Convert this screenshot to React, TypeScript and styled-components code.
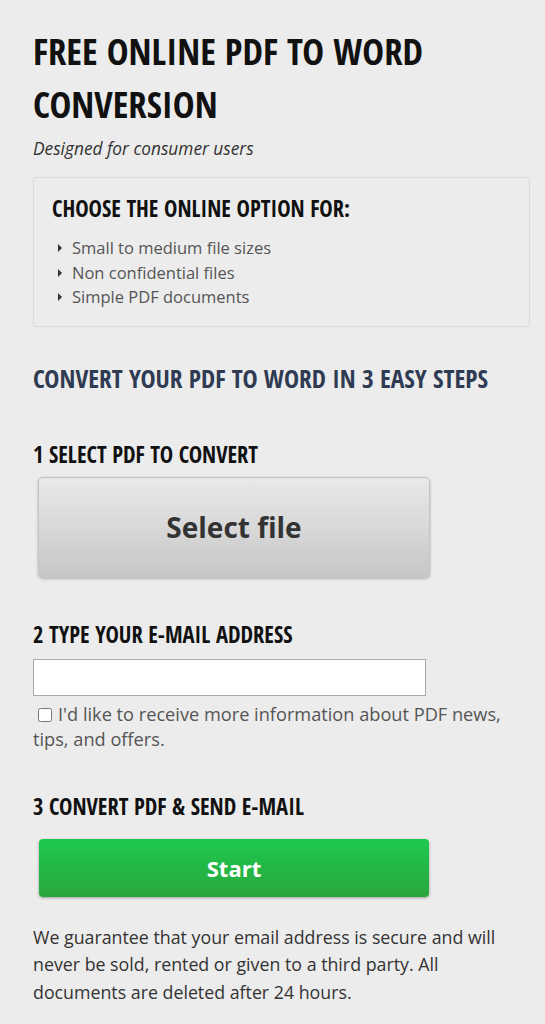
import React from "react";
import styled, { createGlobalStyle } from "styled-components";

const GlobalStyle = createGlobalStyle`
	html, body {
		margin: 0;
		padding: 0;
		background: #ececec;
	}
	body {
		font-family: "Open Sans", "Liberation Sans", sans-serif;
		color: #333;
	}
`;

const Page = styled.div`
	padding: 25px 15px 20px 33px;
	background: #ececec;
`;

const condensed = `
	font-family: "Open Sans Condensed", "Open Sans", "DejaVu Sans Condensed", sans-serif;
	font-stretch: 75%;
	font-weight: 700;
	text-transform: uppercase;
`;

const Title = styled.h1`
	${condensed}
	font-size: 36.7px;
	line-height: 53px;
	color: #111;
	margin: 0;
`;

const Subtitle = styled.p`
	font-style: italic;
	font-size: 17.3px;
	line-height: 22px;
	color: #333;
	margin: 7px 0 0;
`;

const OptionBox = styled.div`
	margin-top: 17px;
	width: 497px;
	box-sizing: border-box;
	border: 1px solid #dadada;
	border-radius: 4px;
	padding: 16px 18px 16px;
	background: #ececec;
`;

const BoxTitle = styled.h3`
	${condensed}
	font-size: 22.5px;
	line-height: 30px;
	color: #111;
	margin: 0 0 12px;
`;

const BulletList = styled.ul`
	list-style: none;
	margin: 0;
	padding: 0;
`;

const Bullet = styled.li`
	display: flex;
	align-items: center;
	font-size: 16.5px;
	line-height: 24.5px;
	color: #555;
	&::before {
		content: "";
		display: inline-block;
		width: 0;
		height: 0;
		margin: 0 10px 0 6px;
		border-top: 4px solid transparent;
		border-bottom: 4px solid transparent;
		border-left: 4px solid #333;
	}
`;

const StepsHeading = styled.h2`
	${condensed}
	font-size: 25.4px;
	line-height: 32px;
	color: #2f3b52;
	margin: 35px 0 0;
`;

const StepTitle = styled.h4<{ $top: number }>`
	${condensed}
	font-size: 22.5px;
	line-height: 28px;
	color: #111;
	margin: ${(p) => p.$top}px 0 0;
`;

const GreyButton = styled.button`
	display: block;
	margin: 8px 0 0 5px;
	width: 392px;
	height: 101px;
	border: 1px solid #c4c4c4;
	border-radius: 5px;
	background: linear-gradient(#e9e9e9, #c7c7c7);
	box-shadow: 0 1px 3px rgba(0, 0, 0, 0.25);
	font-family: "Open Sans", sans-serif;
	font-weight: 700;
	font-size: 28px;
	color: #333;
	cursor: pointer;
`;

const EmailInput = styled.input`
	display: block;
	margin-top: 10px;
	width: 393px;
	height: 37px;
	box-sizing: border-box;
	border: 1px solid #a9a9a9;
	background: #fff;
	outline: none;
`;

const CheckRow = styled.label`
	display: block;
	margin-top: 6px;
	font-size: 18.2px;
	line-height: 25px;
	color: #555;
	padding-right: 20px;
`;

const Check = styled.input`
	width: 14px;
	height: 14px;
	margin: 0 6px 0 5px;
	vertical-align: -1px;
`;

const GreenButton = styled.button`
	display: block;
	margin: 18px 0 0 6px;
	width: 390px;
	height: 58px;
	border: none;
	border-radius: 4px;
	background: linear-gradient(#1dc94f, #2aa63d);
	box-shadow: 0 1px 3px rgba(0, 0, 0, 0.35);
	font-family: "Open Sans", sans-serif;
	font-weight: 700;
	font-size: 22px;
	color: #fff;
	cursor: pointer;
`;

const Notice = styled.p`
	font-size: 17.8px;
	line-height: 27.5px;
	color: #333;
	margin: 27px 0 0;
	padding-right: 2px;
`;

const App = () => {
	return (
		<Page>
			<GlobalStyle />
			<Title>
				Free online PDF to Word
				<br />
				conversion
			</Title>
			<Subtitle>Designed for consumer users</Subtitle>
			<OptionBox>
				<BoxTitle>Choose the online option for:</BoxTitle>
				<BulletList>
					<Bullet>Small to medium file sizes</Bullet>
					<Bullet>Non confidential files</Bullet>
					<Bullet>Simple PDF documents</Bullet>
				</BulletList>
			</OptionBox>
			<StepsHeading>Convert your PDF to Word in 3 easy steps</StepsHeading>
			<StepTitle $top={47}>1 Select PDF to convert</StepTitle>
			<GreyButton>Select file</GreyButton>
			<StepTitle $top={43}>2 Type your e-mail address</StepTitle>
			<EmailInput type="email" />
			<CheckRow>
				<Check type="checkbox" />
				I'd like to receive more information about PDF news, tips, and offers.
			</CheckRow>
			<StepTitle $top={41}>3 Convert PDF &amp; send e-mail</StepTitle>
			<GreenButton>Start</GreenButton>
			<Notice>
				We guarantee that your email address is secure and will never be sold,
				rented or given to a third party. All documents are deleted after 24
				hours.
			</Notice>
		</Page>
	);
};

export default App;
